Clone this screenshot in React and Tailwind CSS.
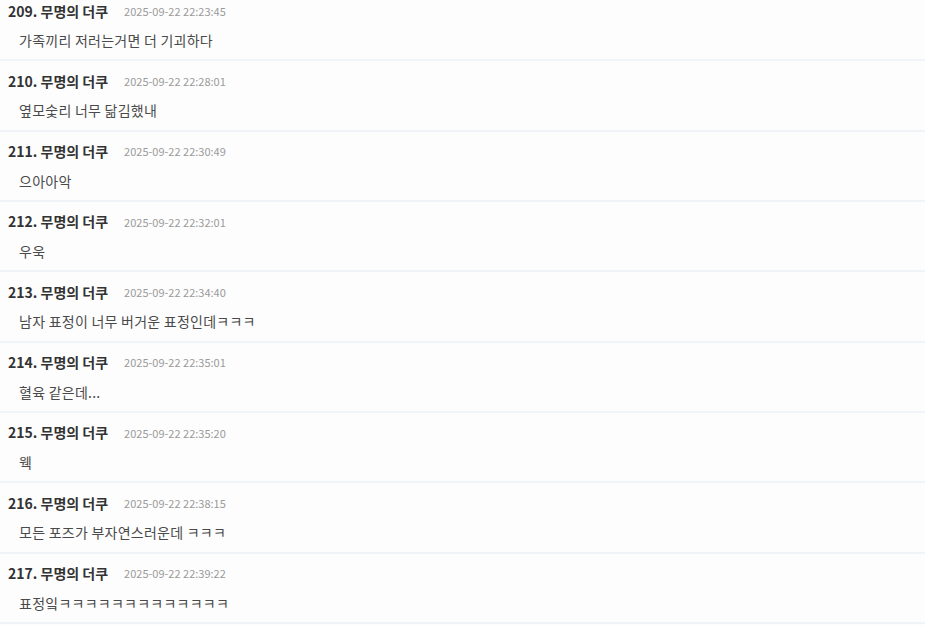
const comments = [
  { no: 209, time: '2025-09-22 22:23:45', text: '가족끼리 저러는거면 더 기괴하다' },
  { no: 210, time: '2025-09-22 22:28:01', text: '옆모숯리 너무 닮김했내' },
  { no: 211, time: '2025-09-22 22:30:49', text: '으아아악' },
  { no: 212, time: '2025-09-22 22:32:01', text: '우욱' },
  { no: 213, time: '2025-09-22 22:34:40', text: '남자 표정이 너무 버거운 표정인데ㅋㅋㅋ' },
  { no: 214, time: '2025-09-22 22:35:01', text: '혈육 같은데...' },
  { no: 215, time: '2025-09-22 22:35:20', text: '웩' },
  { no: 216, time: '2025-09-22 22:38:15', text: '모든 포즈가 부자연스러운데 ㅋㅋㅋ' },
  { no: 217, time: '2025-09-22 22:39:22', text: '표정잌ㅋㅋㅋㅋㅋㅋㅋㅋㅋㅋㅋㅋㅋ' },
];

export default function App() {
  return (
    <div
      className="w-[925px] h-[626px] overflow-hidden bg-[#fdfdfd]"
      style={{ fontFamily: '"Noto Sans CJK KR", "Noto Sans", sans-serif' }}
    >
      <ul className="-mt-[9px]">
        {comments.map(c => (
          <li key={c.no} className="h-[70.33px] border-b-2 border-[#f0f3f7] pt-[10px]">
            <div className="flex items-center h-5 pl-2">
              <span className="text-[14px] font-bold text-[#333]">{c.no}. 무명의 더쿠</span>
              <span className="ml-4 text-[11px] text-[#9a9a9a]">{c.time}</span>
            </div>
            <p className="mt-[9px] h-5 pl-[19px] text-[14px] leading-5 tracking-[0.25px] text-[#4a4a4a]">{c.text}</p>
          </li>
        ))}
      </ul>
    </div>
  );
}
